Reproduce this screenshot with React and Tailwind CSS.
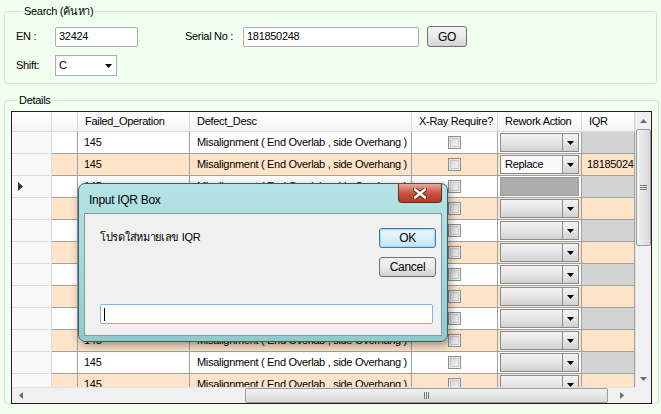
import React from "react";

const FONT = { fontFamily: '"Liberation Sans", Arial, sans-serif', letterSpacing: "-0.3px" };

const rows = Array.from({ length: 12 }, (_, i) => ({
  id: i,
  op: "145",
  desc: "Misalignment ( End Overlab , side Overhang )",
  alt: i % 2 === 1,
  selected: i === 2,
  action: i === 1 ? "Replace" : "",
  iqr: i === 1 ? "18185024" : "",
}));

function DownArrow() {
  return (
    <svg width="7" height="4" viewBox="0 0 7 4">
      <path d="M0 0h7L3.5 4z" fill="#000" />
    </svg>
  );
}

function Checkbox() {
  return (
    <div className="w-[13px] h-[13px] border border-[#8f8f8f] bg-gradient-to-br from-[#dcdcdc] to-[#f8f8f8] p-[1px]">
      <div className="w-full h-full border border-[#c8c8c8] bg-gradient-to-br from-[#d6d6d6] to-[#f4f4f4]" />
    </div>
  );
}

function ActionCombo({ value, flat }) {
  if (flat) {
    return <div className="mx-[2px] h-[19px] w-[80px] bg-[#acacac] border border-[#9a9a9a]" />;
  }
  return (
    <div className="mx-[2px] h-[19px] w-[80px] flex border border-[#8a8a8a]">
      <div
        className={
          value
            ? "flex-1 bg-[#fafafa] flex items-center pl-[4px] text-black"
            : "flex-1 bg-gradient-to-b from-[#f3f3f3] via-[#e6e6e6] to-[#d2d2d2]"
        }
      >
        {value}
      </div>
      <div className="w-[16px] border-l border-[#8a8a8a] bg-gradient-to-b from-[#f3f3f3] via-[#e6e6e6] to-[#d2d2d2] flex items-center justify-center">
        <DownArrow />
      </div>
    </div>
  );
}

function GridRow({ r }) {
  const bg = r.alt ? "bg-[#fde4c8]" : "bg-white";
  const cell = "h-[22px] border-r border-b border-[#a0a0a0] flex items-center shrink-0";
  return (
    <div className="flex">
      <div className="w-[40px] h-[22px] shrink-0 border-r border-b border-[#dcdcdc] bg-[#f9f9f9] flex items-center pl-[6px]">
        {r.selected && (
          <svg width="5" height="9" viewBox="0 0 5 9">
            <path d="M0 0l5 4.5L0 9z" fill="#333" />
          </svg>
        )}
      </div>
      <div className={`${cell} w-[26px] ${bg}`} />
      <div className={`${cell} w-[112px] pl-[6px] ${bg}`}>{r.op}</div>
      <div className={`${cell} w-[222px] pl-[7px] ${bg} whitespace-nowrap overflow-hidden`}>{r.desc}</div>
      <div className={`${cell} w-[86px] justify-center ${bg}`}>
        <Checkbox />
      </div>
      <div className={`${cell} w-[84px] ${bg}`}>
        <ActionCombo value={r.action} flat={r.selected} />
      </div>
      <div
        className={`${cell} w-[53px] pl-[5px] ${r.alt ? "bg-[#fde4c8]" : "bg-[#d3d3d3]"} whitespace-nowrap overflow-hidden`}
      >
        {r.iqr}
      </div>
    </div>
  );
}

function HeaderCell({ w, children }) {
  return (
    <div
      className={`${w} h-[20px] shrink-0 border-r border-b border-[#d8d8d8] bg-gradient-to-b from-white to-[#f4f4f4] flex items-center pl-[7px] whitespace-nowrap overflow-hidden`}
    >
      {children}
    </div>
  );
}

function ScrollArrow({ dir }) {
  const d = {
    up: "M0 4L3.5 0L7 4z",
    down: "M0 0h7L3.5 4z",
    left: "M4 0v7L0 3.5z",
    right: "M0 0v7l4-3.5z",
  }[dir];
  const vert = dir === "up" || dir === "down";
  return (
    <svg width={vert ? 7 : 4} height={vert ? 4 : 7} viewBox={vert ? "0 0 7 4" : "0 0 4 7"}>
      <path d={d} fill="#6e6e6e" />
    </svg>
  );
}

function DataGrid() {
  return (
    <div className="w-[641px] h-[293px] border border-[#202020] bg-white grid grid-cols-[623px_16px] grid-rows-[275px_16px] overflow-hidden">
      <div className="overflow-hidden">
        <div className="flex">
          <HeaderCell w="w-[40px]" />
          <HeaderCell w="w-[26px]" />
          <HeaderCell w="w-[112px]">Failed_Operation</HeaderCell>
          <HeaderCell w="w-[222px]">Defect_Desc</HeaderCell>
          <HeaderCell w="w-[86px]">X-Ray Require?</HeaderCell>
          <HeaderCell w="w-[84px]">Rework Action</HeaderCell>
          <HeaderCell w="w-[53px]">IQR</HeaderCell>
        </div>
        {rows.map((r) => (
          <GridRow key={r.id} r={r} />
        ))}
      </div>
      {/* vertical scrollbar */}
      <div className="bg-[#f0f0f0] border-l border-[#e4e4e4] flex flex-col items-center">
        <div className="h-[17px] w-full flex items-center justify-center">
          <ScrollArrow dir="up" />
        </div>
        <div className="w-[15px] h-[117px] rounded-[2px] border border-[#9a9a9a] bg-gradient-to-r from-[#f2f2f2] to-[#d9d9d9] flex items-center justify-center">
          <div className="flex flex-col gap-[1px]">
            <div className="w-[7px] h-[1px] bg-[#7a7a7a]" />
            <div className="w-[7px] h-[1px] bg-[#7a7a7a]" />
            <div className="w-[7px] h-[1px] bg-[#7a7a7a]" />
          </div>
        </div>
        <div className="flex-1" />
        <div className="h-[17px] w-full flex items-center justify-center">
          <ScrollArrow dir="down" />
        </div>
      </div>
      {/* horizontal scrollbar */}
      <div className="bg-[#f0f0f0] border-t border-[#e4e4e4] flex items-center">
        <div className="w-[17px] h-full flex items-center justify-center">
          <ScrollArrow dir="left" />
        </div>
        <div className="w-[216px]" />
        <div className="w-[363px] h-[15px] rounded-[2px] border border-[#9a9a9a] bg-gradient-to-b from-[#f2f2f2] to-[#d9d9d9] flex items-center justify-center">
          <div className="flex gap-[1px]">
            <div className="w-[1px] h-[7px] bg-[#7a7a7a]" />
            <div className="w-[1px] h-[7px] bg-[#7a7a7a]" />
            <div className="w-[1px] h-[7px] bg-[#7a7a7a]" />
          </div>
        </div>
        <div className="flex-1 flex items-center justify-center">
          <ScrollArrow dir="right" />
        </div>
      </div>
      <div className="bg-[#f0f0f0]" />
    </div>
  );
}

function TextBox({ w, value }) {
  return (
    <div className={`${w} h-[20px] border border-[#abadb3] bg-white rounded-[2px] flex items-center pl-[3px]`}>
      {value}
    </div>
  );
}

function IqrDialog() {
  return (
    <div className="absolute left-[78px] top-[183px] w-[370px] h-[159px] rounded-[7px] border border-[#3e5d62] bg-gradient-to-b from-[#b6e3e5] via-[#a5d9dc] to-[#8fcacd] shadow-[2px_3px_10px_rgba(0,0,0,0.4)] px-[5px] pb-[5px] flex flex-col">
      <div className="h-[29px] shrink-0 flex items-center pl-[5px] pt-[2px] text-[12px] text-black">
        Input IQR Box
      </div>
      <div className="absolute top-[0px] right-[5px] w-[44px] h-[19px] rounded-b-[4px] border border-[#6a2a22] border-t-0 bg-gradient-to-b from-[#e9a99c] via-[#c9543f] to-[#b73a25] flex items-center justify-center">
        <svg width="14" height="11" viewBox="0 0 14 11">
          <path d="M2 1.5L12 9.5M12 1.5L2 9.5" stroke="#6a2418" strokeWidth="4.5" strokeLinecap="round" />
          <path d="M2 1.5L12 9.5M12 1.5L2 9.5" stroke="#fff" strokeWidth="2.6" strokeLinecap="round" />
        </svg>
      </div>
      <div className="flex-1 bg-[#f0f0f0] border border-[#7a9ea2] pl-[15px] pr-[5px] pt-[13px] flex flex-col">
        <div className="flex">
          <div className="flex-1 pt-[2px]" style={{ fontFamily: '"Liberation Sans", "Noto Sans", "DejaVu Sans", sans-serif' }}>
            โปรดใส่หมายเลข IQR
          </div>
          <div className="flex flex-col gap-[9px] pt-[1px]">
            <button className="w-[57px] h-[20px] rounded-[3px] border border-[#3c7fb1] bg-gradient-to-b from-[#eaf6fd] via-[#d9f0fc] to-[#bee6fd] shadow-[inset_0_0_0_1px_#a8d8f6] text-[12px]">
              OK
            </button>
            <button className="w-[57px] h-[20px] rounded-[3px] border border-[#707070] bg-gradient-to-b from-[#f2f2f2] via-[#ebebeb] to-[#cfcfcf] text-[12px]">
              Cancel
            </button>
          </div>
        </div>
        <div className="flex-1" />
        <div className="h-[20px] mb-[11px] mr-[3px] border border-[#7eb4ea] bg-white rounded-[2px] flex items-center pl-[3px]">
          <div className="w-[1px] h-[13px] bg-black" />
        </div>
      </div>
    </div>
  );
}

export default function App() {
  return (
    <div
      className="relative w-[661px] h-[414px] bg-[#f0fff0] text-[11px] text-black overflow-hidden pt-[4px]"
      style={FONT}
    >
      <fieldset className="ml-[4px] w-[653px] h-[80px] border border-[#d5dfd5] rounded-[3px] px-[11px]">
        <legend className="ml-[6px] px-[2px] leading-[14px]">Search (ค้นหา)</legend>
        <div className="flex items-center h-[21px] mt-[8px]">
          <span className="w-[39px]">EN :</span>
          <TextBox w="w-[83px]" value="32424" />
          <span className="ml-[47px] w-[58px]">Serial No :</span>
          <TextBox w="w-[176px]" value="181850248" />
          <button className="ml-[8px] w-[40px] h-[21px] rounded-[3px] border border-[#707070] bg-gradient-to-b from-[#f2f2f2] via-[#ebebeb] to-[#d2d2d2] text-[12px]">
            GO
          </button>
        </div>
        <div className="flex items-center h-[21px] mt-[8px]">
          <span className="w-[39px]">Shift:</span>
          <div className="w-[62px] h-[21px] border border-[#abadb3] bg-white flex items-center pl-[3px]">
            <span className="flex-1">C</span>
            <span className="w-[16px] flex justify-center">
              <DownArrow />
            </span>
          </div>
        </div>
      </fieldset>
      <fieldset className="ml-[4px] mt-[9px] w-[653px] h-[311px] border border-[#d5dfd5] rounded-[3px] px-[6px]">
        <legend className="ml-[6px] px-[2px] leading-[14px]">Details</legend>
        <div className="mt-[4px]">
          <DataGrid />
        </div>
      </fieldset>
      <IqrDialog />
    </div>
  );
}
